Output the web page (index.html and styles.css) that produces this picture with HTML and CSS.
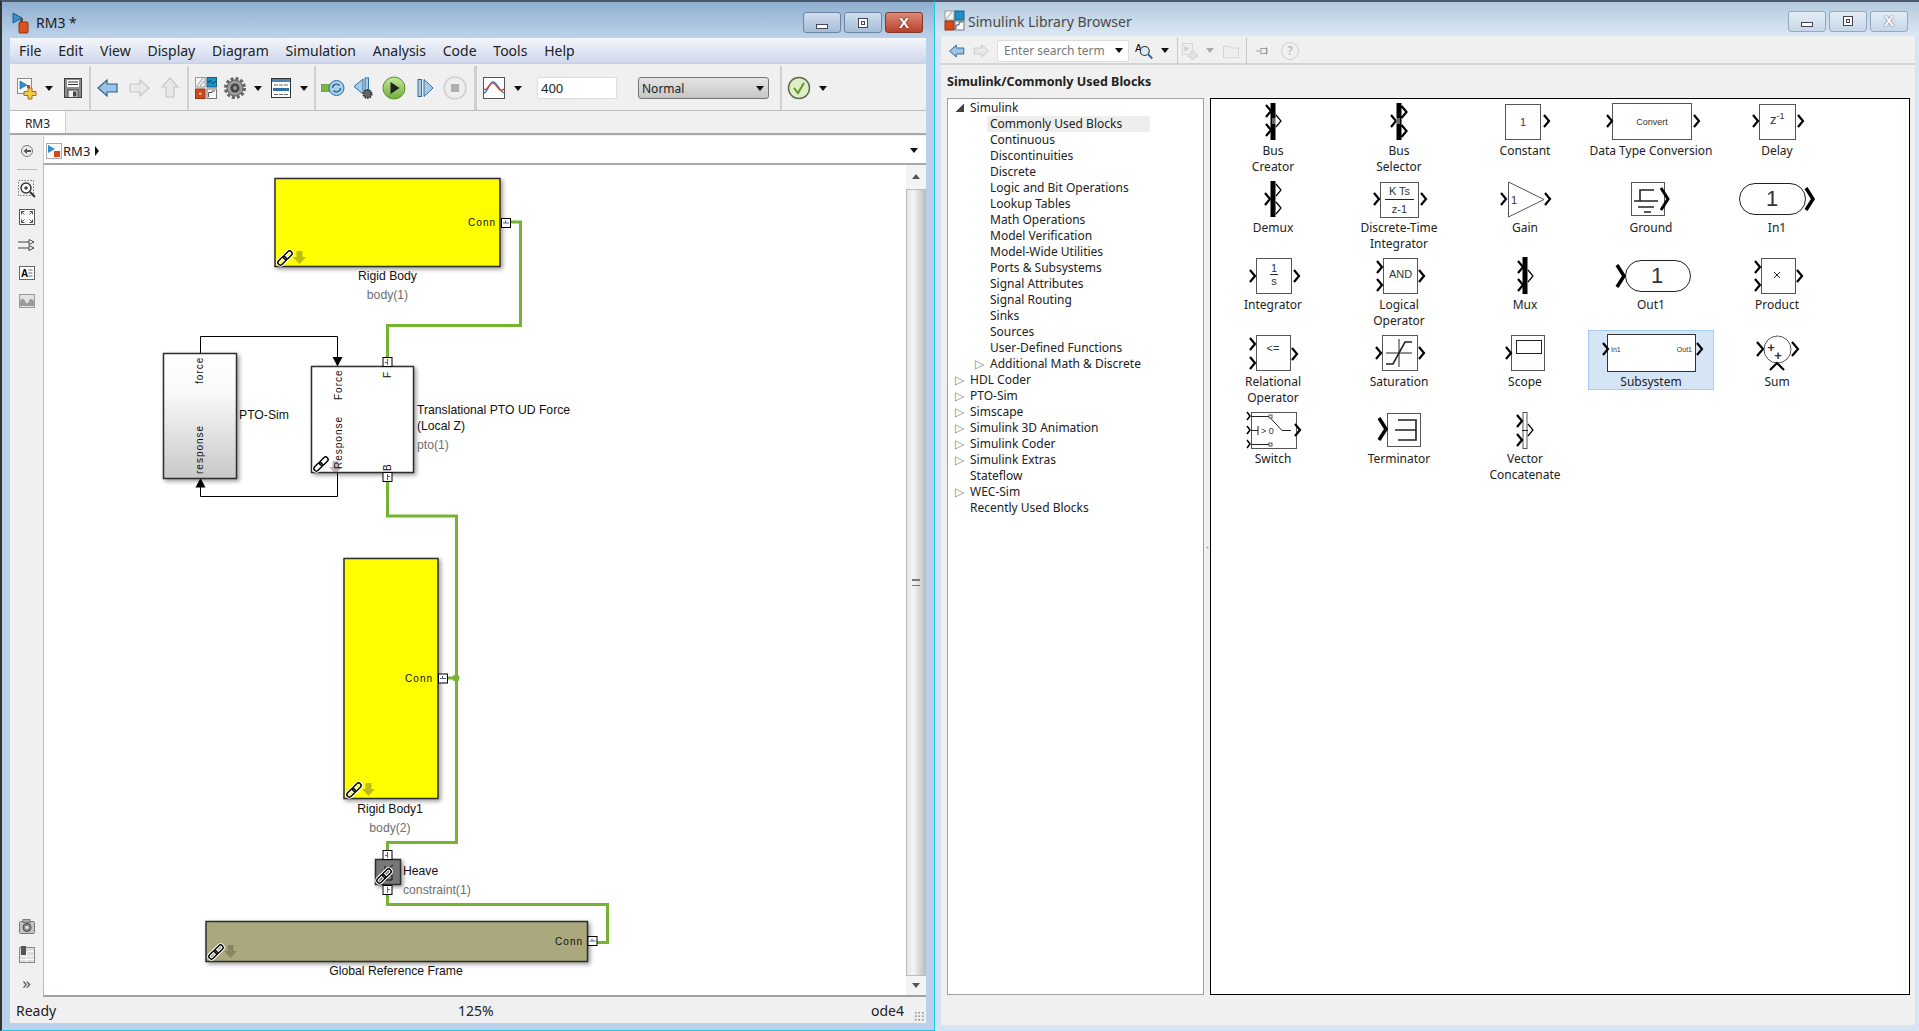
FILE: index.html
```html
<!DOCTYPE html>
<html lang="en">
<head>
  <meta charset="UTF-8">
  <title>RM3 - Simulink</title>
  <link rel="stylesheet" href="styles.css">
</head>
<body>
  <!-- shared shapes -->
  <svg class="defs" aria-hidden="true">
    <defs>
      <linearGradient id="ptoFill" x1="0" y1="0" x2="0" y2="1">
        <stop offset="0" stop-color="#ffffff"/>
        <stop offset="0.3" stop-color="#fafafa"/>
        <stop offset="1" stop-color="#c8c8c8"/>
      </linearGradient>
      <linearGradient id="playFill" x1="0" y1="0" x2="0" y2="1">
        <stop offset="0" stop-color="#c6e89a"/>
        <stop offset="1" stop-color="#6fb03a"/>
      </linearGradient>
      <g id="chev"><polyline class="chev" points="0,-6 5,0 0,6"/></g>
      <g id="chev-thin"><polyline class="chev-thin" points="0,-6 5,0 0,6"/></g>
      <g id="chev-big"><polyline class="chev-big" points="0,-11 7,0 0,11"/></g>
      <g id="port">
        <rect class="port-box" x="0" y="0" width="9" height="9"/>
        <path class="port-mark" d="M1.5 4.5H7.5M4 2v2.5"/>
      </g>
      <g id="link">
        <g transform="rotate(-45 8 8)">
          <rect class="link-halo" x="-1" y="5.5" width="10" height="5" rx="2.5"/>
          <rect class="link-halo" x="7" y="5.5" width="10" height="5" rx="2.5"/>
          <rect class="link-line" x="-1" y="5.5" width="10" height="5" rx="2.5"/>
          <rect class="link-line" x="7" y="5.5" width="10" height="5" rx="2.5"/>
        </g>
      </g>
      <path id="down" d="M3.5 0h6v6h3.5l-6.5 7-6.5-7h3.5z"/>
      <path id="arrow" d="M2 12l9-8v4h10v8H11v4z"/>
    </defs>
  </svg>

  <div class="win win-model">
    <div class="titlebar">
      <svg class="app-icon" viewBox="0 0 20 22">
        <path d="M1 1l9 5-9 5z" fill="#3a8fd0" stroke="#1d5c90"/>
        <path d="M8 6h3v4H8z" fill="#555"/>
        <rect x="7" y="10" width="9" height="11" rx="1" fill="#d9541e" stroke="#8f3410"/>
      </svg>
      <span class="title-text">RM3 *</span>
      <div class="win-btns">
        <div class="wbtn"><span class="g-min"></span></div>
        <div class="wbtn"><span class="g-max"></span></div>
        <div class="wbtn wbtn-close">X</div>
      </div>
    </div>

    <div class="menubar">
      <span>File</span><span>Edit</span><span>View</span><span>Display</span><span>Diagram</span>
      <span>Simulation</span><span>Analysis</span><span>Code</span><span>Tools</span><span>Help</span>
    </div>

    <div class="toolbar">
      <div class="tgroup tg-file">
        <svg class="ico" viewBox="0 0 24 24">
          <rect x="4.5" y="2.5" width="14" height="15" fill="#fafafa" stroke="#8a8a8a"/>
          <path d="M7 5l7 4-7 4z" fill="#2f8fd2" stroke="#1d5c90" stroke-width=".6"/>
          <rect x="14" y="9" width="3" height="3" fill="#c9401a"/>
          <path d="M15 12h4v3.500h4v4h-4v3.500h-4v-3.500h-4v-4h4z" fill="#f6c945" stroke="#9a7414"/>
        </svg>
        <span class="caret"></span>
        <svg class="ico" viewBox="0 0 24 24">
          <rect x="3.500" y="2.500" width="17" height="19" fill="#8d8d8d" stroke="#3f3f3f"/>
          <rect x="6" y="4" width="12" height="7" fill="#fff"/>
          <path d="M7 6h10M7 8.500h10" stroke="#333"/>
          <rect x="7" y="14" width="10" height="7.500" fill="#eee" stroke="#444"/>
          <rect x="12" y="15.500" width="3.500" height="5" fill="#444"/>
        </svg>
      </div>
      <div class="tgroup tg-nav">
        <svg class="ico" viewBox="0 0 24 24"><use href="#arrow" class="arr-on"/></svg>
        <svg class="ico" viewBox="0 0 24 24"><use href="#arrow" class="arr-off" transform="rotate(180 12 12)"/></svg>
        <svg class="ico" viewBox="0 0 24 24"><use href="#arrow" class="arr-off" transform="rotate(90 12 12)"/></svg>
      </div>
      <div class="tgroup tg-lib">
        <svg class="ico" viewBox="0 0 24 24">
          <rect x="1.500" y="1.500" width="9.500" height="9.500" fill="#f4f4f4" stroke="#999"/>
          <path d="M3 10l6-8M6 10l4-5" stroke="#999"/>
          <rect x="13" y="1.500" width="9.500" height="9.500" fill="#1f8fc4" stroke="#13628a"/>
          <path d="M14 7c2-5 3-1 4 0s2 0 4-2" stroke="#063a55" fill="none"/>
          <rect x="1.500" y="13" width="9.500" height="9.500" fill="#d4481a" stroke="#8f3410"/>
          <rect x="4.500" y="16" width="3.500" height="3.500" fill="#f4a27e" stroke="#8f3410" stroke-width=".6"/>
          <rect x="13" y="13" width="9.500" height="9.500" fill="#fafafa" stroke="#777"/>
          <path d="M14.500 21v-4.500h3.500V15h3" stroke="#555" fill="none"/>
        </svg>
        <svg class="ico" viewBox="0 0 24 24">
          <circle cx="12" cy="12" r="9.500" fill="none" stroke="#666" stroke-width="3" stroke-dasharray="3 2"/>
          <circle cx="12" cy="12" r="8" fill="#9a9a9a" stroke="#5c5c5c"/>
          <circle cx="12" cy="12" r="4.500" fill="#444"/>
          <circle cx="12" cy="12" r="2" fill="#999"/>
        </svg>
        <span class="caret"></span>
        <svg class="ico" viewBox="0 0 24 24">
          <rect x="2.500" y="2.500" width="19" height="19" fill="#fff" stroke="#333"/>
          <rect x="3" y="3" width="18" height="3" fill="#4d84b8"/>
          <path d="M5 9h14M5 18.500h14" stroke="#666" stroke-dasharray="4 1"/>
          <rect x="4" y="12" width="16" height="3" fill="#2d6fa8"/>
        </svg>
        <span class="caret"></span>
      </div>
      <div class="tgroup tg-run">
        <svg class="ico" viewBox="0 0 24 24">
          <rect x="0" y="8.500" width="10" height="7" fill="#7ab648" stroke="#4f8024" stroke-width=".6"/>
          <circle cx="15.500" cy="12" r="7.500" fill="#a9d0ea" stroke="#2a6a9e"/>
          <path d="M11.500 12a4 4 0 0 1 7-2.500M19.500 12a4 4 0 0 1-7 2.500" fill="none" stroke="#245f90" stroke-width="1.300"/>
        </svg>
        <svg class="ico" viewBox="0 0 24 24">
          <path d="M11 3v15L2 10.500z" fill="#a7cde8" stroke="#2f6c9e"/>
          <rect x="13" y="2" width="3.500" height="14" fill="#a7cde8" stroke="#2f6c9e"/>
          <circle cx="15.500" cy="18" r="4" fill="#666" stroke="#333" stroke-width="2" stroke-dasharray="1.500 1"/>
        </svg>
        <svg class="ico" viewBox="0 0 24 24">
          <circle cx="12" cy="12" r="11" fill="url(#playFill)" stroke="#5b8f30"/>
          <path d="M8.500 6l9 6-9 6z" fill="#222"/>
        </svg>
        <svg class="ico" viewBox="0 0 24 24">
          <rect x="5" y="3.500" width="3.500" height="17" fill="#a7cde8" stroke="#2f6c9e"/>
          <path d="M11 3.500v17l9-8.500z" fill="#a7cde8" stroke="#2f6c9e"/>
        </svg>
        <svg class="ico" viewBox="0 0 24 24">
          <circle cx="12" cy="12" r="11" fill="#ededed" stroke="#cfcfcf" stroke-width="1.500"/>
          <rect x="8" y="8" width="8" height="8" fill="#aeaeae"/>
        </svg>
      </div>
      <div class="tgroup tg-sim">
        <svg class="ico" viewBox="0 0 24 24">
          <rect x="1.500" y="1.500" width="21" height="21" fill="#fff" stroke="#555"/>
          <path d="M2 17c4-1 5-11 9-11s6 9 11 11" fill="none" stroke="#2f7bc0" stroke-width="1.300"/>
          <path d="M2 13c3 3 6-7 9-6s5 6 7 7 3 0 4-1" fill="none" stroke="#d3402c" stroke-width="1.300"/>
        </svg>
        <span class="caret"></span>
        <div class="stop-time">400</div>
        <div class="mode-select"><span>Normal</span><span class="caret"></span></div>
      </div>
      <div class="tgroup tg-check">
        <svg class="ico" viewBox="0 0 24 24">
          <circle cx="12" cy="12" r="10.500" fill="#dfeec4" stroke="#5f6a55" stroke-width="1.500"/>
          <path d="M7 12l4 5 6-10" fill="none" stroke="#5a9a2a" stroke-width="2"/>
        </svg>
        <span class="caret"></span>
      </div>
    </div>

    <div class="tabbar"><div class="tab">RM3</div></div>

    <div class="addressrow">
      <div class="strip-top">
        <svg class="ico-s" viewBox="0 0 14 14">
          <circle cx="7" cy="7" r="5.500" fill="#eee" stroke="#777"/>
          <path d="M3.500 7l3.500-3v6z" fill="#555"/>
          <rect x="6" y="6" width="5" height="2" fill="#555"/>
        </svg>
      </div>
      <div class="address">
        <svg class="ico-a" viewBox="0 0 16 16">
          <rect x=".5" y=".5" width="15" height="15" fill="#fafafa" stroke="#aaa"/>
          <path d="M2 2l7 4-7 4z" fill="#2f8fd2"/>
          <rect x="8" y="8" width="6" height="6" fill="#d4481a"/>
        </svg>
        <span class="crumb">RM3</span>
        <span class="crumb-arrow"></span>
        <span class="caret address-caret"></span>
      </div>
    </div>

    <div class="workarea">
      <div class="sidestrip">
        <div class="strip-group">
          <svg class="ico-s" viewBox="0 0 18 18">
            <rect x=".5" y=".5" width="15" height="15" fill="none" stroke="#777" stroke-dasharray="1.500 1.500"/>
            <circle cx="8" cy="8" r="5" fill="#fff" stroke="#333" stroke-width="1.400"/>
            <path d="M6 8h4M8 6v4" stroke="#111"/>
            <path d="M12 12l5 5" stroke="#333" stroke-width="2"/>
          </svg>
          <svg class="ico-s" viewBox="0 0 18 18">
            <rect x="1.500" y="1.500" width="15" height="15" fill="#fff" stroke="#555"/>
            <path d="M3.500 3.500l3 3M3.500 3.500v3M3.500 3.500h3M14.500 3.500l-3 3M14.500 3.500v3M14.500 3.500h-3M3.500 14.500l3-3M3.500 14.500v-3M3.500 14.500h3M14.500 14.500l-3-3M14.500 14.500v-3M14.500 14.500h-3" stroke="#555" fill="none"/>
          </svg>
          <svg class="ico-s" viewBox="0 0 18 18">
            <path d="M0 6h11M0 12h11" stroke="#444"/>
            <path d="M11 3.500l5 2.500-5 2.500zM11 9.500l5 2.500-5 2.500z" fill="#fff" stroke="#444"/>
          </svg>
          <svg class="ico-s" viewBox="0 0 18 18">
            <rect x="1.500" y="2.500" width="15" height="13" fill="#fff" stroke="#666"/>
            <text class="strip-letter" x="3" y="12.500">A</text>
            <path d="M10.500 6h4M10.500 9h4M10.500 12h4" stroke="#666"/>
          </svg>
          <svg class="ico-s" viewBox="0 0 18 18">
            <rect x="1.500" y="2.500" width="15" height="13" fill="#e3e3e3" stroke="#999"/>
            <path d="M2 14V9c2-3 4-3 5 0s3 3 4 0 3-2 5 0v5z" fill="#9a9a9a"/>
          </svg>
        </div>
        <div class="strip-group strip-bottom">
          <svg class="ico-s" viewBox="0 0 18 18">
            <rect x="1.500" y="3.500" width="15" height="12" rx="1" fill="#c4c4c4" stroke="#777"/>
            <rect x="5" y="1.500" width="7" height="3" fill="#aaa" stroke="#777"/>
            <circle cx="9" cy="9.500" r="4" fill="#888" stroke="#444"/>
            <circle cx="9" cy="9.500" r="1.800" fill="#ddd"/>
          </svg>
          <svg class="ico-s" viewBox="0 0 18 18">
            <rect x="1.500" y="1.500" width="15" height="15" fill="#ddd" stroke="#888"/>
            <rect x="3" y="0" width="5" height="9" fill="#555"/>
            <path d="M9 5.500h7M9 10h7M2 10h6M2 13.500h14M8.500 6v10" stroke="#fff"/>
          </svg>
          <span class="strip-more">&raquo;</span>
        </div>
      </div>

      <div class="canvas">
        <svg class="diagram" viewBox="44 165 861 830" width="861" height="830">
          <!-- signal lines -->
          <path class="wire" d="M200.500 353V336.500H337.500V358"/>
          <path class="wire" d="M337.500 472V496.500H200.500V486"/>
          <path class="wire-tip" d="M332.500 357h10l-5 9.500z"/>
          <path class="wire-tip" d="M195.500 487.500h10l-5-9.500z"/>

          <!-- blocks -->
          <rect class="blk blk-yellow" x="275" y="178.500" width="225" height="88"/>
          <rect class="blk blk-pto" x="163.500" y="353.500" width="73" height="125"/>
          <rect class="blk blk-white" x="311.500" y="366.500" width="102" height="106"/>
          <rect class="blk blk-yellow" x="344" y="558.500" width="94" height="240"/>
          <rect class="blk blk-gray" x="375.500" y="859.500" width="25" height="25"/>
          <rect class="blk blk-olive" x="206" y="921.500" width="381.500" height="40"/>

          <!-- physical connections -->
          <path class="conn" d="M510 222H520.500V325.500H387.500V357"/>
          <path class="conn" d="M387.500 481V516H456.500V842.500H387.500V851"/>
          <path class="conn" d="M447 678H456"/>
          <circle class="conn-dot" cx="456" cy="678" r="3.500"/>
          <path class="conn" d="M387.500 895V904.500H607.500V942.500H597"/>

          <!-- ports -->
          <use href="#port" x="501.500" y="218.500"/>
          <use href="#port" x="383" y="357.500" transform="rotate(-90 387.500 362)"/>
          <use href="#port" x="383" y="472.500" transform="rotate(90 387.500 477)"/>
          <use href="#port" x="438.500" y="674"/>
          <use href="#port" x="383" y="850.500" transform="rotate(-90 387.500 855)"/>
          <use href="#port" x="383" y="885.500" transform="rotate(90 387.500 890)"/>
          <use href="#port" x="588" y="936.500"/>

          <!-- link badges -->
          <use href="#link" x="277" y="250"/>
          <use href="#down" x="293" y="251" class="badge-arrow"/>
          <use href="#link" x="313" y="456"/>
          <use href="#down" x="329" y="461" class="badge-arrow"/>
          <use href="#link" x="346" y="782"/>
          <use href="#down" x="362" y="783" class="badge-arrow"/>
          <path class="heave-mark" d="M385 866v8M389 868l4-3M382 880h10v-5h-4v2h-6z"/>
          <use href="#link" x="376" y="868"/>
          <use href="#link" x="208" y="944"/>
          <use href="#down" x="224" y="945" class="badge-arrow"/>

          <!-- port labels -->
          <text class="port-text" x="496" y="226" text-anchor="end">Conn</text>
          <text class="port-text" x="433" y="682" text-anchor="end">Conn</text>
          <text class="port-text" x="583" y="945" text-anchor="end">Conn</text>
          <text class="port-text" transform="translate(203 384) rotate(-90)">force</text>
          <text class="port-text" transform="translate(203 474) rotate(-90)">response</text>
          <text class="port-text" transform="translate(342 400) rotate(-90)">Force</text>
          <text class="port-text" transform="translate(342 469) rotate(-90)">Response</text>
          <text class="port-text" transform="translate(391 378) rotate(-90)">F</text>
          <text class="port-text" transform="translate(391 471) rotate(-90)">B</text>

          <!-- block names -->
          <text class="name" x="387.500" y="280" text-anchor="middle">Rigid Body</text>
          <text class="name-sub" x="387.500" y="299" text-anchor="middle">body(1)</text>
          <text class="name" x="239" y="419">PTO-Sim</text>
          <text class="name" x="417" y="414">Translational PTO UD Force</text>
          <text class="name" x="417" y="430">(Local Z)</text>
          <text class="name-sub" x="417" y="449">pto(1)</text>
          <text class="name" x="390" y="813" text-anchor="middle">Rigid Body1</text>
          <text class="name-sub" x="390" y="832" text-anchor="middle">body(2)</text>
          <text class="name" x="403" y="875">Heave</text>
          <text class="name-sub" x="403" y="894">constraint(1)</text>
          <text class="name" x="396" y="975" text-anchor="middle">Global Reference Frame</text>
        </svg>
        <div class="vscroll">
          <span class="sb-up"></span>
          <div class="sb-thumb"><span class="sb-grip"></span></div>
          <span class="sb-down"></span>
        </div>
      </div>
    </div>

    <div class="statusbar">
      <span class="st-left">Ready</span>
      <span class="st-mid">125%</span>
      <span class="st-right">ode4</span>
      <span class="st-grip"></span>
    </div>
  </div>

  <div class="win win-lib">
    <div class="titlebar titlebar-idle">
      <svg class="app-icon-lib" viewBox="0 0 22 22">
        <rect x="1" y="1" width="9" height="9" fill="#f4f4f4" stroke="#999"/>
        <path d="M2 9l6-7" stroke="#999"/>
        <rect x="11" y="1" width="9" height="9" fill="#1f8fc4" stroke="#13628a"/>
        <rect x="1" y="11" width="9" height="9" fill="#d4481a" stroke="#8f3410"/>
        <rect x="11" y="11" width="9" height="9" fill="#fafafa" stroke="#777"/>
        <path d="M12 19v-4h3v-3h4" stroke="#555" fill="none"/>
      </svg>
      <span class="title-text title-idle">Simulink Library Browser</span>
      <div class="win-btns">
        <div class="wbtn wbtn-idle"><span class="g-min"></span></div>
        <div class="wbtn wbtn-idle"><span class="g-max"></span></div>
        <div class="wbtn wbtn-idle wbtn-x">X</div>
      </div>
    </div>

    <div class="libtools">
      <svg class="ico-r" viewBox="0 0 24 24"><use href="#arrow" class="arr-on"/></svg>
      <svg class="ico-r" viewBox="0 0 24 24"><use href="#arrow" class="arr-off" transform="rotate(180 12 12)"/></svg>
      <div class="searchbox"><span>Enter search term</span><span class="caret"></span></div>
      <svg class="ico-r" viewBox="0 0 24 24">
        <text class="finder-letter" x="0" y="13">A</text>
        <circle cx="13" cy="12" r="6" fill="#d8ecf7" stroke="#333" stroke-width="1.500"/>
        <path d="M17 16l6 6" stroke="#2a6a9e" stroke-width="2.500"/>
      </svg>
      <span class="caret"></span>
      <span class="vsep vsep-tight"></span>
      <svg class="ico-r" viewBox="0 0 24 24">
        <rect x="3" y="2" width="14" height="15" fill="#eee" stroke="#ccc"/>
        <path d="M6 5l6 4-6 4z" fill="#ccc"/>
        <path d="M15 12h4v4h4v4h-4v3h-4v-3h-4v-4h4z" fill="#e4e4e4" stroke="#ccc"/>
      </svg>
      <span class="caret caret-off"></span>
      <svg class="ico-r" viewBox="0 0 24 24">
        <path d="M2 6h8l2 2h10v13H2z" fill="#efefef" stroke="#ccc"/>
      </svg>
      <span class="vsep"></span>
      <svg class="ico-r" viewBox="0 0 24 24">
        <path d="M4 12h6" stroke="#888"/>
        <rect x="10.500" y="8.500" width="8" height="7" fill="#eee" stroke="#888"/>
        <path d="M18 7v10" stroke="#888"/>
      </svg>
      <span class="help-round">?</span>
    </div>

    <div class="libheading">Simulink/Commonly Used Blocks</div>

    <div class="libbody">
      <div class="tree">
        <div class="row"><span class="tw tw-open"></span>Simulink</div>
        <div class="row sub sub-on"><span>Commonly Used Blocks</span></div>
        <div class="row sub">Continuous</div>
        <div class="row sub">Discontinuities</div>
        <div class="row sub">Discrete</div>
        <div class="row sub">Logic and Bit Operations</div>
        <div class="row sub">Lookup Tables</div>
        <div class="row sub">Math Operations</div>
        <div class="row sub">Model Verification</div>
        <div class="row sub">Model-Wide Utilities</div>
        <div class="row sub">Ports &amp; Subsystems</div>
        <div class="row sub">Signal Attributes</div>
        <div class="row sub">Signal Routing</div>
        <div class="row sub">Sinks</div>
        <div class="row sub">Sources</div>
        <div class="row sub">User-Defined Functions</div>
        <div class="row sub"><span class="tw tw-sub"></span>Additional Math &amp; Discrete</div>
        <div class="row"><span class="tw"></span>HDL Coder</div>
        <div class="row"><span class="tw"></span>PTO-Sim</div>
        <div class="row"><span class="tw"></span>Simscape</div>
        <div class="row"><span class="tw"></span>Simulink 3D Animation</div>
        <div class="row"><span class="tw"></span>Simulink Coder</div>
        <div class="row"><span class="tw"></span>Simulink Extras</div>
        <div class="row">Stateflow</div>
        <div class="row"><span class="tw"></span>WEC-Sim</div>
        <div class="row">Recently Used Blocks</div>
      </div>
      <span class="splitter"></span>
      <div class="blocks">
        <div class="blockgrid">

          <div class="tile">
            <svg viewBox="0 0 126 44">
              <rect class="bar" x="60.500" y="3" width="5" height="37"/>
              <use href="#chev" x="56" y="11"/><use href="#chev" x="56" y="30"/>
              <use href="#chev-thin" x="66" y="21"/>
              <path class="fine" d="M62 19h4M62 21h4M62 23h4" stroke="#fff"/>
            </svg>
            <div class="tile-name">Bus<br>Creator</div>
          </div>
          <div class="tile">
            <svg viewBox="0 0 126 44">
              <rect class="bar" x="60.500" y="3" width="5" height="37"/>
              <use href="#chev" x="65.500" y="12"/><use href="#chev" x="65.500" y="31"/>
              <use href="#chev" x="55" y="21"/>
              <path class="fine" d="M60 19h4M60 21h4M60 23h4" stroke="#fff"/>
            </svg>
            <div class="tile-name">Bus<br>Selector</div>
          </div>
          <div class="tile">
            <svg viewBox="0 0 126 44">
              <rect class="box" x="43.500" y="4.500" width="35" height="35"/>
              <text class="bt" x="61" y="26" text-anchor="middle">1</text>
              <use href="#chev" x="82" y="21"/>
            </svg>
            <div class="tile-name">Constant</div>
          </div>
          <div class="tile">
            <svg viewBox="0 0 126 44">
              <rect class="box" x="24.500" y="3.500" width="79" height="36"/>
              <text class="bt-s" x="64" y="25" text-anchor="middle">Convert</text>
              <use href="#chev" x="19" y="21"/><use href="#chev" x="106" y="21"/>
            </svg>
            <div class="tile-name">Data Type Conversion</div>
          </div>
          <div class="tile">
            <svg viewBox="0 0 126 44">
              <rect class="box" x="45.500" y="4.500" width="36" height="35"/>
              <text class="bt-m" x="56" y="24">z<tspan class="sup" dy="-5">-1</tspan></text>
              <use href="#chev" x="39" y="21"/><use href="#chev" x="84" y="21"/>
            </svg>
            <div class="tile-name">Delay</div>
          </div>

          <div class="tile">
            <svg viewBox="0 0 126 44">
              <rect class="bar" x="60.500" y="4" width="5" height="36"/>
              <use href="#chev-thin" x="66" y="13"/><use href="#chev-thin" x="66" y="31"/>
              <use href="#chev" x="55" y="22"/>
            </svg>
            <div class="tile-name">Demux</div>
          </div>
          <div class="tile">
            <svg viewBox="0 0 126 44">
              <rect class="box" x="44.500" y="5.500" width="38" height="35"/>
              <text class="bt" x="63.500" y="18" text-anchor="middle">K Ts</text>
              <path class="ln" d="M49 22.500h29"/>
              <text class="bt" x="63.500" y="36" text-anchor="middle">z-1</text>
              <use href="#chev" x="38" y="22"/><use href="#chev" x="85" y="22"/>
            </svg>
            <div class="tile-name">Discrete-Time<br>Integrator</div>
          </div>
          <div class="tile">
            <svg viewBox="0 0 126 44">
              <path class="box" d="M46.500 5v35L82 22.500z"/>
              <text class="bt" x="49" y="27">1</text>
              <use href="#chev" x="39" y="22"/><use href="#chev" x="83" y="22"/>
            </svg>
            <div class="tile-name">Gain</div>
          </div>
          <div class="tile">
            <svg viewBox="0 0 126 44">
              <rect class="box" x="43.500" y="5.500" width="33" height="33"/>
              <path class="ln-b" d="M46 24h24M66 13H52v11M50 30h16M56 35h7"/>
              <polyline class="chev-g" points="73,11 80,22 73,33"/>
            </svg>
            <div class="tile-name">Ground</div>
          </div>
          <div class="tile">
            <svg viewBox="0 0 126 44">
              <rect class="box box-k" x="25.500" y="6.500" width="66" height="31" rx="15.500"/>
              <text class="bt-xl" x="58" y="29" text-anchor="middle">1</text>
              <use href="#chev-big" x="92" y="22"/>
            </svg>
            <div class="tile-name">In1</div>
          </div>

          <div class="tile">
            <svg viewBox="0 0 126 44">
              <rect class="box" x="46.500" y="4.500" width="35" height="35"/>
              <text class="bt" x="64" y="18" text-anchor="middle">1</text>
              <path class="ln" d="M60 20.500h8"/>
              <text class="bt" x="64" y="31" text-anchor="middle">s</text>
              <use href="#chev" x="40" y="22"/><use href="#chev" x="84" y="22"/>
            </svg>
            <div class="tile-name">Integrator</div>
          </div>
          <div class="tile">
            <svg viewBox="0 0 126 44">
              <rect class="box" x="47.500" y="4.500" width="34" height="35"/>
              <text class="bt" x="64.500" y="24" text-anchor="middle">AND</text>
              <use href="#chev" x="41" y="13"/><use href="#chev" x="41" y="31"/>
              <use href="#chev" x="83" y="22"/>
            </svg>
            <div class="tile-name">Logical<br>Operator</div>
          </div>
          <div class="tile">
            <svg viewBox="0 0 126 44">
              <rect class="bar" x="60.500" y="3" width="5" height="37"/>
              <use href="#chev" x="56" y="13"/><use href="#chev" x="56" y="31"/>
              <use href="#chev-thin" x="66" y="22"/>
            </svg>
            <div class="tile-name">Mux</div>
          </div>
          <div class="tile">
            <svg viewBox="0 0 126 44">
              <rect class="box box-k" x="37.500" y="6.500" width="65" height="31" rx="15.500"/>
              <text class="bt-xl" x="69" y="29" text-anchor="middle">1</text>
              <use href="#chev-big" x="29" y="22"/>
            </svg>
            <div class="tile-name">Out1</div>
          </div>
          <div class="tile">
            <svg viewBox="0 0 126 44">
              <rect class="box" x="47.500" y="4.500" width="34" height="35"/>
              <path class="ln" d="M60 18l6 6M66 18l-6 6"/>
              <use href="#chev" x="41" y="13"/><use href="#chev" x="41" y="31"/>
              <use href="#chev" x="83" y="22"/>
            </svg>
            <div class="tile-name">Product</div>
          </div>

          <div class="tile">
            <svg viewBox="0 0 126 44">
              <rect class="box" x="46.500" y="4.500" width="34" height="35"/>
              <text class="bt" x="63" y="21" text-anchor="middle">&lt;=</text>
              <use href="#chev" x="40" y="13"/><use href="#chev" x="40" y="32"/>
              <use href="#chev" x="82" y="23"/>
            </svg>
            <div class="tile-name">Relational<br>Operator</div>
          </div>
          <div class="tile">
            <svg viewBox="0 0 126 44">
              <rect class="box" x="46.500" y="4.500" width="35" height="35"/>
              <path class="ln-b" d="M50 33h7l12-22h7"/>
              <path class="ln" d="M63 8v28M50 22h26"/>
              <use href="#chev" x="40" y="22"/><use href="#chev" x="83" y="22"/>
            </svg>
            <div class="tile-name">Saturation</div>
          </div>
          <div class="tile">
            <svg viewBox="0 0 126 44">
              <rect class="box" x="49.500" y="4.500" width="33" height="35"/>
              <rect class="box box-k" x="54.500" y="9.500" width="25" height="13"/>
              <use href="#chev" x="44" y="22"/>
            </svg>
            <div class="tile-name">Scope</div>
          </div>
          <div class="tile tile-on">
            <svg viewBox="0 0 126 44">
              <rect class="box" x="19.500" y="3.500" width="88" height="37"/>
              <text class="bt-xs" x="23" y="21">In1</text>
              <text class="bt-xs" x="104" y="21" text-anchor="end">Out1</text>
              <use href="#chev" x="15" y="18"/><use href="#chev" x="109" y="18"/>
            </svg>
            <div class="tile-name">Subsystem</div>
          </div>
          <div class="tile">
            <svg viewBox="0 0 126 44">
              <circle class="box" cx="63.500" cy="18.500" r="13.500"/>
              <text class="bt-plus" x="57" y="21" text-anchor="middle">+</text>
              <text class="bt-plus" x="64" y="29" text-anchor="middle">+</text>
              <polyline class="chev" points="43,11 49,18 43,25"/>
              <polyline class="chev" points="78,11 84,18 78,25"/>
              <polyline class="chev" points="56,39 63,32 70,39"/>
            </svg>
            <div class="tile-name">Sum</div>
          </div>

          <div class="tile">
            <svg viewBox="0 0 126 44">
              <rect class="box" x="41.500" y="4.500" width="45" height="36"/>
              <path class="ln" d="M41 8.500h18l13 14h9M41 36.500h18M41 22.500h7M48 18v9"/>
              <rect class="box" x="59" y="7" width="3" height="3"/>
              <rect class="box" x="59" y="35" width="3" height="3"/>
              <text class="bt-s" x="51" y="26">&gt; 0</text>
              <polyline class="chev-sm" points="37,4 40,8 37,12"/>
              <polyline class="chev-sm" points="37,18 40,22 37,26"/>
              <polyline class="chev-sm" points="37,32 40,36 37,40"/>
              <use href="#chev" x="85" y="22"/>
            </svg>
            <div class="tile-name">Switch</div>
          </div>
          <div class="tile">
            <svg viewBox="0 0 126 44">
              <rect class="box" x="51.500" y="5.500" width="33" height="33"/>
              <path class="ln-b" d="M59 22h21M62 12h18v20H62"/>
              <use href="#chev-big" x="43" y="21"/>
            </svg>
            <div class="tile-name">Terminator</div>
          </div>
          <div class="tile">
            <svg viewBox="0 0 126 44">
              <rect class="box" x="61" y="4.500" width="4" height="36"/>
              <path class="ln" d="M60 22.500h6"/>
              <use href="#chev" x="55" y="13"/><use href="#chev" x="55" y="32"/>
              <use href="#chev-thin" x="66" y="22"/>
            </svg>
            <div class="tile-name">Vector<br>Concatenate</div>
          </div>

        </div>
      </div>
    </div>
  </div>
</body>
</html>
```

FILE: styles.css
```css
html, body {
  margin: 0;
  height: 100%;
  overflow: hidden;
}
body {
  display: flex;
  width: 1919px;
  height: 1031px;
  font-family: "Noto Sans", sans-serif;
  font-size: 12px;
  color: #222;
  background: #d6e5f5;
}
.defs {
  position: absolute;
  width: 0;
  height: 0;
}
.win {
  display: flex;
  flex-direction: column;
  box-sizing: border-box;
  height: 1031px;
}

/* left window */
.win-model {
  width: 935px;
  padding: 0 8px 7px 8px;
  background: #b9d1ea;
  border-left: 2px solid #333;
  border-top: 2px solid #4a5a6a;
  border-right: 1px solid #1bc7e0;
  border-bottom: 1px solid #1bc7e0;
}
.win-lib {
  width: 984px;
  padding: 0 7px 6px 6px;
  background: #d6e5f5;
  border-top: 2px solid #4a5a6a;
}

/* title bars */
.titlebar {
  display: flex;
  align-items: center;
  box-sizing: border-box;
  height: 36px;
  flex: none;
  margin: 0 -8px 0 -8px;
  padding: 5px 11px 0 10px;
  background: linear-gradient(#8fafd0, #bcd2e9);
}
.titlebar-idle {
  height: 34px;
  margin: 0 -7px 0 -6px;
  padding: 4px 11px 0 9px;
  background: linear-gradient(#b4c9dd, #dce9f5);
}
.app-icon {
  width: 20px;
  height: 22px;
  margin-right: 4px;
}
.app-icon-lib {
  width: 22px;
  height: 22px;
  margin-right: 2px;
}
.title-text {
  font-size: 14px;
  color: #1c1c1c;
  flex: 1;
}
.title-idle {
  color: #4a4a4a;
}
.win-btns {
  display: flex;
  gap: 3px;
}
.wbtn {
  display: flex;
  align-items: center;
  justify-content: center;
  box-sizing: border-box;
  width: 38px;
  height: 21px;
  border: 1px solid #6f86a3;
  border-radius: 3px;
  background: linear-gradient(#d0dded, #a6bdd8);
}
.wbtn-idle {
  border-color: #93a9c2;
  background: linear-gradient(#e4edf6, #c6d7e8);
}
.wbtn-close {
  font-family: "Liberation Sans", sans-serif;
  font-weight: bold;
  font-size: 15px;
  color: #fff;
  border-color: #7c3a30;
  background: linear-gradient(#dc8a7a, #b8402c);
  text-shadow: 0 0 2px #50100a;
}
.wbtn-x {
  font-family: "Liberation Sans", sans-serif;
  font-weight: bold;
  font-size: 14px;
  color: #fff;
  text-shadow: 0 0 2px #456;
}
.g-min {
  width: 10px;
  height: 3px;
  margin-top: 7px;
  background: #fff;
  border: 1px solid #445;
}
.g-max {
  box-sizing: border-box;
  width: 10px;
  height: 10px;
  background: #eef3f8;
  border: 1px solid #445;
  box-shadow: inset 0 0 0 2px #fff, inset 0 0 0 3px #445;
}

/* menu */
.menubar {
  display: flex;
  align-items: center;
  gap: 16.800px;
  flex: none;
  height: 25px;
  padding-left: 9px;
  font-size: 14px;
  background: linear-gradient(#f4f6fb, #ced7ec);
}

/* toolbar */
.toolbar {
  display: flex;
  flex: none;
  height: 48px;
  padding-top: 2px;
  background: #f0f0f0;
  border-top: 1px solid #d0d0d0;
  border-bottom: 1px solid #bbb;
  box-sizing: border-box;
}
.tgroup {
  display: flex;
  align-items: center;
  box-sizing: border-box;
  border-right: 2px solid #d0d0d0;
}
.tg-file { width: 81px; padding-left: 3px; gap: 6px; }
.tg-nav { width: 98px; padding-left: 5px; gap: 7px; }
.tg-lib { width: 127px; padding-left: 5px; gap: 5px; }
.tg-run { width: 160px; padding-left: 5px; gap: 6.500px; }
.tg-sim { width: 306px; padding-left: 5px; gap: 6px; border-left: 1px solid #ccc; }
.tg-check { padding-left: 5px; gap: 6px; border-right: 0; }
.ico {
  width: 24px;
  height: 24px;
  flex: none;
}
.caret {
  display: inline-block;
  flex: none;
  width: 0;
  height: 0;
  margin: 0 2px;
  border-left: 4px solid transparent;
  border-right: 4px solid transparent;
  border-top: 5px solid #111;
}
.stop-time {
  box-sizing: border-box;
  width: 80px;
  height: 22px;
  margin-left: 7px;
  padding-left: 3px;
  background: #fff;
  border: 1px solid #ddd;
  border-radius: 2px;
  font-size: 13px;
  line-height: 20px;
}
.mode-select {
  display: flex;
  align-items: center;
  justify-content: space-between;
  box-sizing: border-box;
  width: 131px;
  height: 22px;
  margin-left: 15px;
  padding: 0 2px 0 3px;
  font-size: 12px;
  border: 1px solid #777;
  border-radius: 3px;
  background: linear-gradient(#e4e4e4, #c6c6c6);
}

/* tab + address */
.tabbar {
  flex: none;
  height: 24px;
  background: #f0f0f0;
  border-bottom: 2px solid #a8a8a8;
  box-sizing: border-box;
}
.tab {
  width: 55px;
  height: 22px;
  text-align: center;
  line-height: 25px;
  background: #fff;
  border-right: 1px solid #ccc;
}
.addressrow {
  display: flex;
  flex: none;
  height: 30px;
  background: #f0f0f0;
}
.strip-top {
  display: flex;
  align-items: center;
  justify-content: center;
  width: 33px;
  flex: none;
  padding-top: 2px;
  box-sizing: border-box;
}
.ico-s {
  width: 18px;
  height: 18px;
}
.strip-top .ico-s {
  width: 14px;
  height: 14px;
}
.address {
  display: flex;
  align-items: center;
  flex: 1;
  margin: 1px 0 0;
  padding: 2px 6px 0 2px;
  background: #fff;
  border-bottom: 2px solid #a8a8a8;
  border-left: 1px solid #ccc;
}
.ico-a {
  width: 16px;
  height: 16px;
  margin-right: 1px;
}
.crumb {
  font-size: 13px;
}
.crumb-arrow {
  margin-left: 5px;
  border-top: 5px solid transparent;
  border-bottom: 5px solid transparent;
  border-left: 4px solid #111;
}
.address-caret {
  margin-left: auto;
}

/* work area */
.workarea {
  display: flex;
  flex: 1;
  min-height: 0;
}
.sidestrip {
  display: flex;
  flex-direction: column;
  justify-content: space-between;
  align-items: center;
  width: 33px;
  flex: none;
  padding: 4px 0 5px;
  box-sizing: border-box;
  background: #f0f0f0;
}
.strip-group {
  display: flex;
  flex-direction: column;
  align-items: center;
  gap: 10px;
  padding-top: 10px;
  border-top: 1px solid #bbb;
  width: 20px;
}
.strip-bottom {
  border-top: 0;
  padding-top: 0;
}
.strip-letter {
  font-family: "Liberation Sans", sans-serif;
  font-weight: bold;
  font-size: 10px;
}
.strip-more {
  font-size: 17px;
  line-height: 18px;
  color: #555;
}
.canvas {
  display: flex;
  flex: 1;
  min-width: 0;
  background: #fff;
  border-left: 1px solid #bbb;
  border-bottom: 2px solid #a0a0a0;
}
.diagram {
  flex: none;
  display: block;
}
.vscroll {
  display: flex;
  flex-direction: column;
  align-items: center;
  flex: 1;
  margin-left: 1px;
  background: #f4f4f4;
}
.sb-up, .sb-down {
  width: 0;
  height: 0;
  flex: none;
  border-left: 4px solid transparent;
  border-right: 4px solid transparent;
}
.sb-up {
  margin: 9px 0 10px;
  border-bottom: 5px solid #555;
}
.sb-down {
  margin: 7px 0 7px;
  border-top: 5px solid #555;
}
.sb-thumb {
  display: flex;
  align-items: center;
  justify-content: center;
  flex: 1;
  width: 100%;
  background: linear-gradient(to right, #e4e4e4, #f4f4f4 35%, #c0c0c0);
  border: 1px solid #bbb;
  box-sizing: border-box;
}
.sb-grip {
  width: 8px;
  height: 5px;
  border-top: 1px solid #777;
  border-bottom: 1px solid #777;
  box-shadow: inset 0 2px 0 -1px #777;
}

/* diagram parts */
.wire { fill: none; stroke: #000; stroke-width: 1; }
.wire-tip { fill: #000; }
.conn { fill: none; stroke: #76b32e; stroke-width: 3; }
.conn-dot { fill: #76b32e; }
.port-box { fill: #fff; stroke: #000; stroke-width: 1; }
.port-mark { fill: none; stroke: #44688c; stroke-width: 1; }
.blk {
  stroke: #2e2e2e;
  stroke-width: 1.500;
  filter: drop-shadow(2px 2px 2px rgba(0, 0, 0, .4));
}
.blk-yellow { fill: #ffff00; }
.blk-white { fill: #fff; }
.blk-pto { fill: url(#ptoFill); }
.blk-gray { fill: #777; }
.blk-olive { fill: #a9a97d; }
.link-halo { fill: none; stroke: #fff; stroke-width: 3.500; }
.link-line { fill: none; stroke: #000; stroke-width: 1.400; }
.badge-arrow { fill: rgba(80, 80, 50, .38); }
.heave-mark { fill: none; stroke: #111; stroke-width: 1; }
.diagram text {
  font-family: "Liberation Sans", sans-serif;
}
.name { font-size: 12.200px; fill: #111; }
.name-sub { font-size: 12.200px; fill: #6e6e6e; }
.port-text { font-size: 10px; letter-spacing: 1px; fill: #111; }

/* status bar */
.statusbar {
  display: flex;
  align-items: center;
  position: relative;
  flex: none;
  height: 26px;
  font-size: 14px;
  background: #f0f0f0;
}
.st-left { width: 466px; padding-left: 6px; box-sizing: border-box; margin-right: -18px; }
.st-mid { flex: 1; }
.st-right { margin-right: 22px; }
.st-grip {
  position: absolute;
  right: 2px;
  bottom: 2px;
  width: 10px;
  height: 10px;
  background: radial-gradient(circle, #999 1px, transparent 1.200px) 0 0 / 3.500px 3.500px;
}

/* library window */
.libtools {
  display: flex;
  align-items: center;
  flex: none;
  gap: 6px;
  height: 29px;
  padding: 2px 0 0 7px;
  background: #f0f0f0;
  border-bottom: 2px solid #d4d4d4;
  box-sizing: border-box;
  margin: 0 -3px 0 0;
}
.ico-r {
  width: 18px;
  height: 18px;
  flex: none;
}
.searchbox {
  display: flex;
  align-items: center;
  justify-content: space-between;
  box-sizing: border-box;
  width: 132px;
  height: 22px;
  margin-left: 1px;
  padding: 0 3px 0 6px;
  font-size: 12px;
  color: #777;
  background: #fff;
  border: 1px solid #ddd;
  border-radius: 2px;
}
.finder-letter {
  font-family: "Liberation Sans", sans-serif;
  font-size: 14px;
}
.vsep {
  width: 1px;
  height: 27px;
  background: #c8c8c8;
}
.vsep-tight {
  margin-right: -4px;
}
.caret-off {
  border-top-color: #aaa;
}
.help-round {
  display: block;
  box-sizing: border-box;
  width: 18px;
  height: 18px;
  margin-left: 4px;
  text-align: center;
  line-height: 15px;
  font-weight: bold;
  color: #c4c4c4;
  border: 1.500px solid #d0d0d0;
  border-radius: 50%;
}
.libheading {
  flex: none;
  height: 33px;
  line-height: 33px;
  padding-left: 6px;
  font-size: 12.500px;
  font-weight: bold;
  background: #f0f0f0;
  margin-right: -3px;
}
.libbody {
  display: flex;
  flex: 1;
  min-height: 0;
  padding: 0 5px 30px 6px;
  background: #f0f0f0;
  margin-right: -3px;
}
.tree {
  box-sizing: border-box;
  width: 257px;
  flex: none;
  padding-top: 1px;
  background: #fff;
  border: 1px solid #a0a0a0;
}
.row {
  position: relative;
  height: 16px;
  line-height: 16px;
  padding-left: 22px;
  white-space: nowrap;
}
.sub {
  padding-left: 42px;
}
.sub-on span {
  display: inline-block;
  width: 160px;
  margin-left: -3px;
  padding-left: 3px;
  background: #eee;
}
.tw {
  position: absolute;
  left: 7px;
  top: 0;
  font-family: "DejaVu Sans", sans-serif;
  font-size: 12px;
  color: #8a8a8a;
}
.tw::before {
  content: "\25B7";
}
.tw-open {
  top: 4px;
  left: 8px;
  width: 8px;
  height: 8px;
  background: linear-gradient(135deg, transparent 50%, #444 50%);
}
.tw-open::before {
  content: "";
}
.tw-sub {
  left: 27px;
}
.splitter {
  width: 6px;
  flex: none;
  background: radial-gradient(circle, #9ab 0.900px, transparent 1.100px) 2px 448px / 3px 3px no-repeat;
  background-size: 3px 3px;
}
.blocks {
  flex: 1;
  min-width: 0;
  background: #fff;
  border: 1px solid #000;
}
.blockgrid {
  display: grid;
  grid-template-columns: repeat(5, 126px);
  grid-auto-rows: 77px;
  margin: 1px 0 0 -1px;
}
.tile {
  align-self: start;
  text-align: center;
}
.tile svg {
  display: block;
  width: 126px;
  height: 44px;
}
.tile-name {
  margin-top: -1px;
  line-height: 16px;
  font-size: 12px;
}
.tile-on {
  background: #d6e5f5;
  outline: 1px solid #a9cdf0;
  outline-offset: -1px;
  margin-top: -1px;
  padding-top: 1px;
}
.box { fill: #fff; stroke: #555; stroke-width: 1; }
.box-k { stroke: #222; }
.tile-on .box { stroke: #333; }
.bar { fill: #000; }
.chev { fill: none; stroke: #000; stroke-width: 2.200; }
.chev-thin { fill: none; stroke: #000; stroke-width: 1.200; }
.chev-sm { fill: none; stroke: #000; stroke-width: 1.500; }
.chev-big { fill: none; stroke: #000; stroke-width: 3.500; }
.chev-g { fill: none; stroke: #000; stroke-width: 3; }
.ln { fill: none; stroke: #222; stroke-width: 1; }
.ln-b { fill: none; stroke: #222; stroke-width: 1.600; }
.fine { stroke-width: .8; }
.tile text {
  font-family: "Liberation Sans", sans-serif;
  fill: #333;
}
.bt { font-size: 11px; }
.bt-m { font-size: 13px; }
.bt-s { font-size: 9px; }
.bt-xs { font-size: 7px; }
.bt-xl { font-size: 22px; fill: #111; }
.bt-plus { font-size: 13px; font-weight: bold; }
.sup { font-size: 9px; }
.arr-on { fill: #9cc3e4; stroke: #2d5f8f; stroke-width: 1.200; }
.arr-off { fill: #e8e8e8; stroke: #c8c8c8; stroke-width: 1.200; }
```
